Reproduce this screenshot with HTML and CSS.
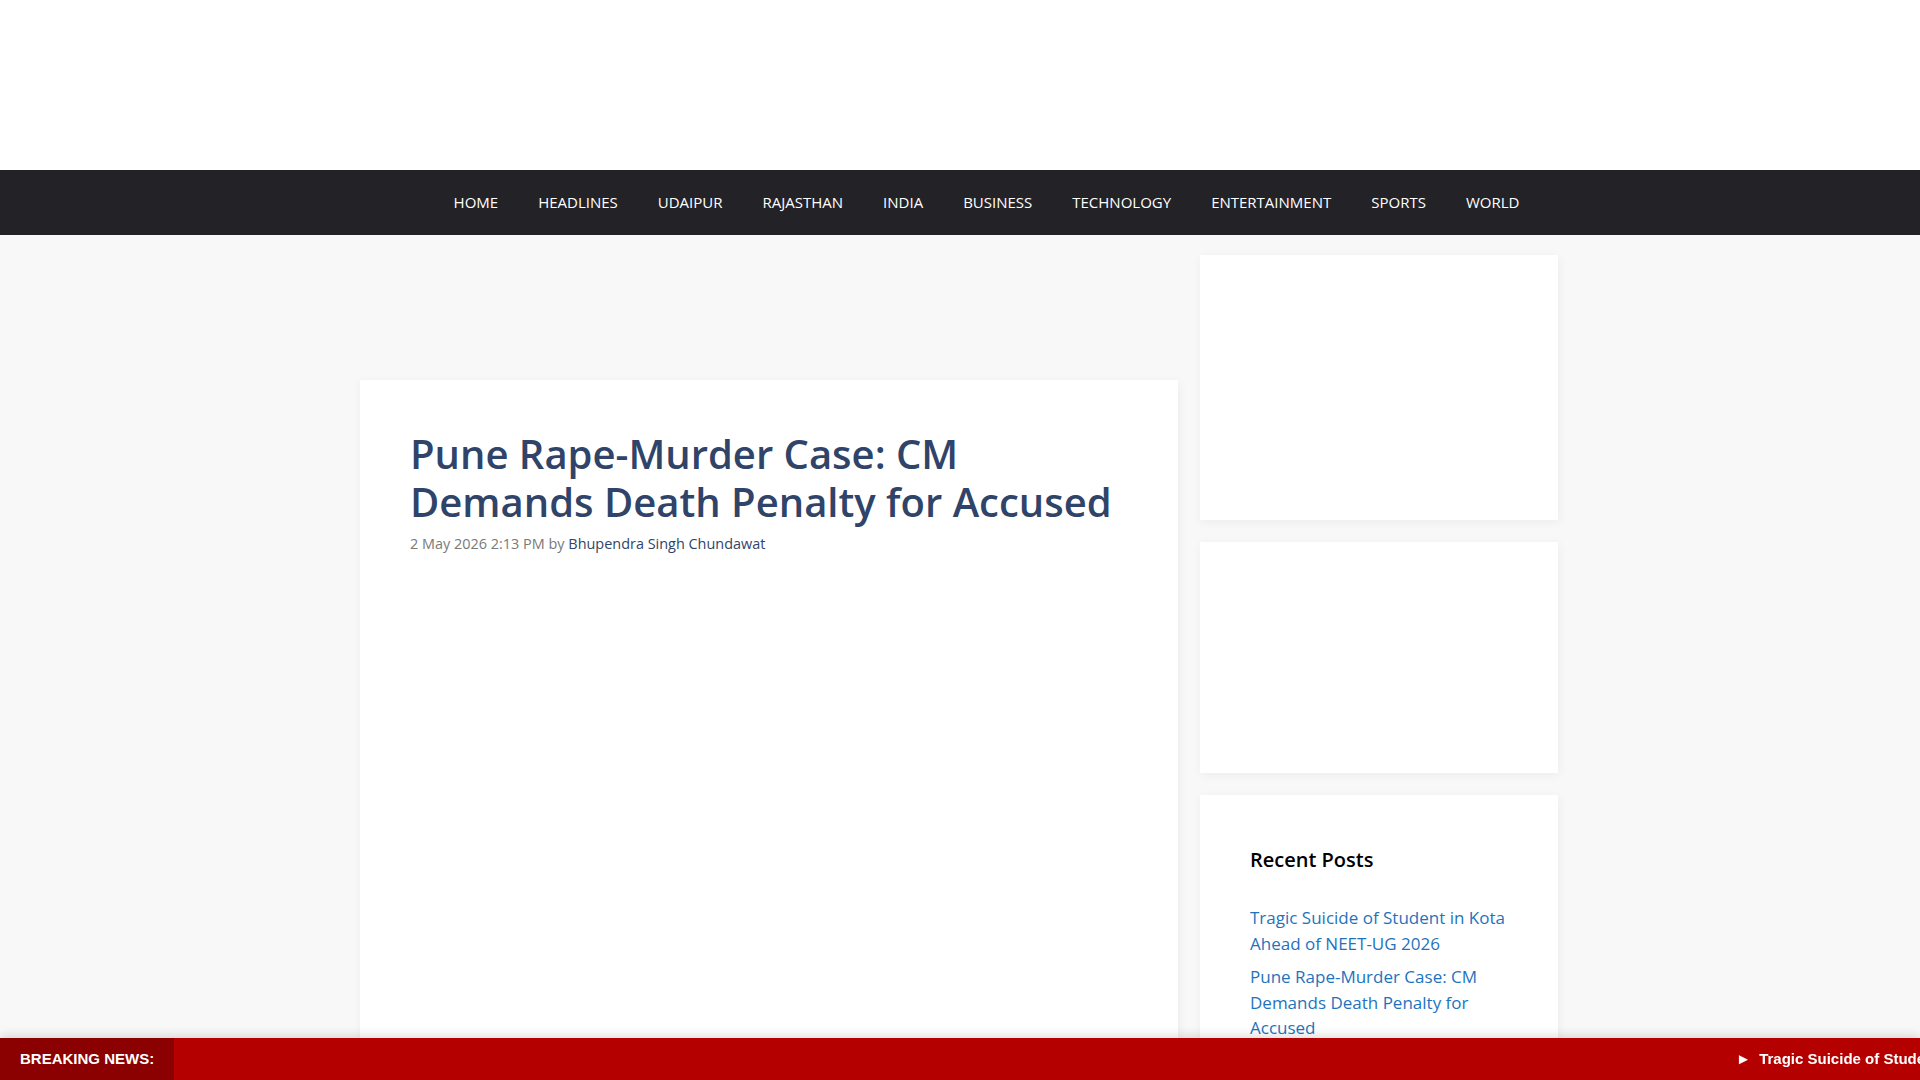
FILE: index.html
```html
<!DOCTYPE html>
<html lang="en">
<head>
    <meta charset="utf-8"/>
    <title>Pune Rape-Murder Case: CM Demands Death Penalty for Accused</title>
    <meta name="viewport" content="width=device-width,initial-scale=1"/>
    <link rel="stylesheet" href="styles.css">
</head>
<body>
<!--页头-->
<header class="site-header"></header>

<nav class="main-nav">
    <ul class="menu">
        <li><a href="#">HOME</a></li>
        <li><a href="#">HEADLINES</a></li>
        <li><a href="#">UDAIPUR</a></li>
        <li><a href="#">RAJASTHAN</a></li>
        <li><a href="#">INDIA</a></li>
        <li><a href="#">BUSINESS</a></li>
        <li><a href="#">TECHNOLOGY</a></li>
        <li><a href="#">ENTERTAINMENT</a></li>
        <li><a href="#">SPORTS</a></li>
        <li><a href="#">WORLD</a></li>
    </ul>
</nav>

<div class="site-content">
    <main class="content-area">
        <!--广告位-->
        <div class="ad-slot"></div>

        <article class="post-card">
            <h1 class="entry-title">Pune Rape-Murder Case: CM Demands Death Penalty for Accused</h1>
            <div class="entry-meta">
                <span class="posted-on">2 May 2026 2:13 PM</span>
                by <a class="author" href="#">Bhupendra Singh Chundawat</a>
            </div>
            <div class="entry-content"></div>
        </article>
    </main>

    <aside class="sidebar">
        <div class="widget widget-ad-1"></div>
        <div class="widget widget-ad-2"></div>
        <div class="widget">
            <h2 class="widget-title">Recent Posts</h2>
            <ul class="recent-posts">
                <li><a href="#">Tragic Suicide of Student in Kota Ahead of NEET-UG 2026</a></li>
                <li><a href="#">Pune Rape-Murder Case: CM Demands Death Penalty for Accused</a></li>
                <li><a href="#">Rajasthan Weather Update: Heatwave Alert in Several Districts</a></li>
            </ul>
        </div>
    </aside>
</div>

<!--滚动新闻-->
<div class="breaking-bar">
    <div class="breaking-label">BREAKING NEWS:</div>
    <div class="breaking-ticker">
        <div class="ticker-track">&#9658;&nbsp; Tragic Suicide of Student in Kota Ahead of NEET-UG 2026</div>
    </div>
</div>
</body>
</html>
```

FILE: styles.css
```css
body {
    margin: 0;
    background: #f8f8f8;
    font-family: "Open Sans", "Noto Sans", sans-serif;
    font-size: 17px;
    line-height: 1.5;
    color: #222;
}

a {
    text-decoration: none;
}

.site-header {
    height: 170px;
    background: #fff;
}

.main-nav {
    background: #232227;
}

.main-nav .menu {
    list-style: none;
    margin: 0;
    padding: 0 0 0 53px;
    display: flex;
    justify-content: center;
}

.main-nav .menu a {
    display: block;
    padding: 0 20px;
    line-height: 65px;
    font-size: 15px;
    color: #fff;
}

.site-content {
    width: 1200px;
    margin: 0 auto;
    display: flex;
    gap: 22px;
}

.content-area {
    width: 818px;
}

.ad-slot {
    height: 125px;
    margin-top: 20px;
}

.post-card {
    background: #fff;
    padding: 50px;
    min-height: 900px;
    box-shadow: 1px 2px 10px rgba(0, 0, 0, 0.05);
}

.entry-title {
    margin: 0;
    font-size: 40px;
    font-weight: 600;
    line-height: 1.2;
    color: #2f4468;
}

.entry-meta {
    margin-top: 7px;
    font-size: 85%;
    color: #7a7a7a;
}

.entry-meta .author {
    color: #2f4468;
}

.sidebar {
    width: 358px;
    padding-top: 20px;
}

.widget {
    background: #fff;
    padding: 50px;
    margin-bottom: 22px;
    box-shadow: 1px 2px 10px rgba(0, 0, 0, 0.05);
}

.widget-ad-1 {
    height: 165px;
}

.widget-ad-2 {
    height: 131px;
}

.widget-title {
    margin: 0 0 30px;
    font-size: 20px;
    font-weight: 600;
    line-height: 1.5;
    color: #000;
}

.recent-posts {
    list-style: none;
    margin: 0;
    padding: 0;
}

.recent-posts li {
    margin-bottom: 8px;
}

.recent-posts a {
    color: #1e73be;
}

.breaking-bar {
    position: fixed;
    left: 0;
    right: 0;
    bottom: 0;
    height: 42px;
    display: flex;
    background: #b50000;
    box-shadow: 0 -2px 10px rgba(0, 0, 0, 0.15);
    font-family: "Liberation Sans", Arial, sans-serif;
    font-weight: bold;
    font-size: 15px;
    line-height: 42px;
    color: #fff;
}

.breaking-label {
    width: 174px;
    box-sizing: border-box;
    padding-left: 20px;
    background: #8b0000;
    flex-shrink: 0;
}

.breaking-ticker {
    flex: 1;
    overflow: hidden;
    white-space: nowrap;
}

.ticker-track {
    padding-left: 1562px;
}
```
